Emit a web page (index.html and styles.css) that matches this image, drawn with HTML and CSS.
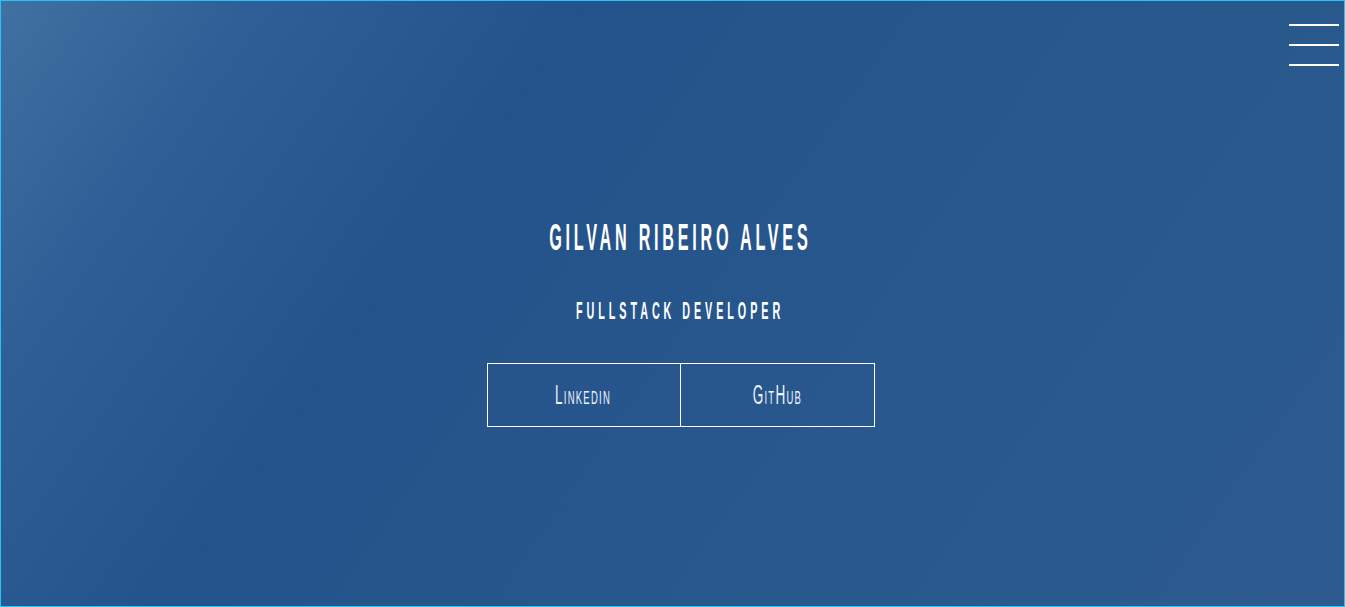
FILE: index.html
```html
<!DOCTYPE html>
<html lang="pt-BR">
<head>
<meta charset="utf-8">
<title>Gilvan Ribeiro Alves</title>
<link rel="stylesheet" href="styles.css">
</head>
<body>
<div class="page">
  <header class="topbar">
    <button class="menu" aria-label="Menu">
      <span class="bar"></span>
      <span class="bar"></span>
      <span class="bar"></span>
    </button>
  </header>
  <main class="hero">
    <h1 class="name"><span class="squeeze">GILVAN RIBEIRO ALVES</span></h1>
    <h2 class="role"><span class="squeeze">FULLSTACK DEVELOPER</span></h2>
    <nav class="links">
      <a class="link" href="#"><span class="squeeze">Linkedin</span></a>
      <a class="link" href="#"><span class="squeeze">GitHub</span></a>
    </nav>
  </main>
</div>
</body>
</html>
```
FILE: styles.css
```css
html, body {
  margin: 0;
  padding: 0;
  height: 100%;
}
body {
  font-family: "Liberation Sans Narrow", "Liberation Sans", "DejaVu Sans Condensed", sans-serif;
  color: #fff;
}
.page {
  box-sizing: border-box;
  height: 100vh;
  border: 1px solid #1ec8f0;
  background: linear-gradient(125deg, #4170a1 0%, #2f5f96 14%, #23538a 33%, #27578c 60%, #2d5b8f 100%);
  display: flex;
  flex-direction: column;
}
.topbar {
  display: flex;
  justify-content: flex-end;
  padding: 23px 5px 0 0;
  height: 42px;
}
.menu {
  background: none;
  border: 0;
  padding: 0;
  width: 50px;
  height: 42px;
  display: flex;
  flex-direction: column;
  justify-content: space-between;
  cursor: pointer;
}
.bar {
  display: block;
  width: 50px;
  height: 2px;
  background: #fff;
}
.hero {
  display: flex;
  flex-direction: column;
  align-items: center;
  padding: 152px 0 0 16px;
}
.squeeze {
  display: inline-block;
  transform: scaleX(0.45);
  white-space: nowrap;
}
.name {
  margin: 0;
  font-size: 36px;
  font-weight: 700;
  line-height: 40px;
  letter-spacing: 8.3px;
}
.role {
  margin: 38px 0 0;
  font-size: 24px;
  font-weight: 700;
  line-height: 30px;
  letter-spacing: 8.7px;
}
.links {
  display: flex;
  margin-top: 37px;
}
.link {
  box-sizing: border-box;
  width: 194px;
  height: 64px;
  border: 1px solid #fff;
  display: flex;
  align-items: center;
  justify-content: center;
  color: #eef4ff;
  text-decoration: none;
  font-size: 27px;
  font-variant: small-caps;
  font-weight: 400;
}
.link .squeeze {
  transform: scaleX(0.5);
  letter-spacing: 2.5px;
}
.link + .link {
  margin-left: -1px;
  width: 195px;
}
```
